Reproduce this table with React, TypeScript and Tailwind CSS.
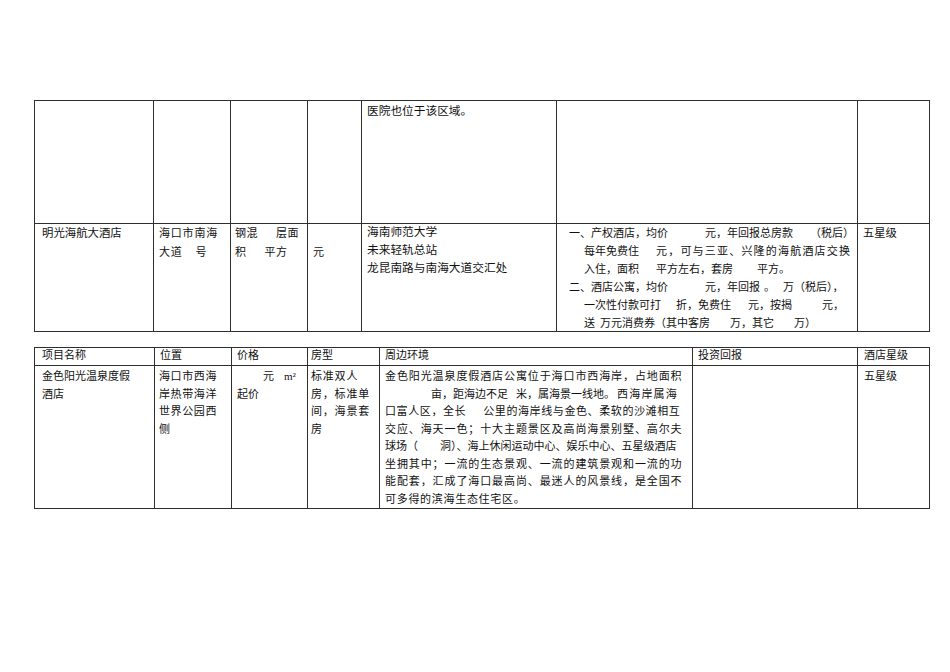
import React from 'react';

const cell = 'border-r border-b border-[#2e2e2e]';

function Gap({ w }: { w: string }) {
  return <span className={`inline-block ${w}`} />;
}

function TopTable() {
  return (
    <div className="grid w-[896px] grid-cols-[119px_77px_77px_54px_195px_301px_72px] grid-rows-[123px_108px] border-l border-t border-[#2e2e2e]">
      {/* row 1 — tail of the previous entry */}
      <div className={cell} />
      <div className={cell} />
      <div className={cell} />
      <div className={cell} />
      <div className={`${cell} pl-[5px] pt-[2px] text-[11.7px] leading-[18px]`}>医院也位于该区域。</div>
      <div className={cell} />
      <div className={cell} />

      {/* row 2 */}
      <div className={`${cell} pl-[7px] text-[11.4px] leading-[18px]`}>明光海航大酒店</div>
      <div className={`${cell} pl-[5px] leading-[19.4px] tracking-[0.8px] whitespace-nowrap`}>
        <div>海口市南海</div>
        <div>大道<Gap w="w-[13px]" />号</div>
      </div>
      <div className={`${cell} pl-[4px] leading-[19.4px] tracking-[0.5px] whitespace-nowrap`}>
        <div>钢混<Gap w="w-[18px]" />层面</div>
        <div>积<Gap w="w-[18px]" />平方</div>
      </div>
      <div className={`${cell} pl-[5px] pt-[19px] leading-[19px]`}>元</div>
      <div className={`${cell} pl-[5px] text-[11.7px] leading-[18px]`}>
        <div>海南师范大学</div>
        <div>未来轻轨总站</div>
        <div>龙昆南路与南海大道交汇处</div>
      </div>
      <div className={`${cell} pl-[12px] leading-[18px] whitespace-nowrap`}>
        <div>一、产权酒店，均价<Gap w="w-[37px]" />元，年回报总房款<Gap w="w-[17px]" />（税后）</div>
        <div className="pl-[15px]">
          每年免费住<Gap w="w-[17px]" /><span className="tracking-[1.2px]">元，可与三亚、兴隆的海航酒店交换</span>
        </div>
        <div className="pl-[15px]">入住，面积<Gap w="w-[17px]" />平方左右，套房<Gap w="w-[24px]" />平方。</div>
        <div>二、酒店公寓，均价<Gap w="w-[37px]" />元，年回报<Gap w="w-[4px]" />。<Gap w="w-[8px]" />万（税后），</div>
        <div className="pl-[15px]">
          一次性付款可打<Gap w="w-[15px]" />折，免费住<Gap w="w-[17px]" />元，按揭<Gap w="w-[30px]" />元，
        </div>
        <div className="pl-[15px]">
          送<Gap w="w-[5px]" />万元消费券（其中客房<Gap w="w-[20px]" />万，其它<Gap w="w-[20px]" />万）
        </div>
      </div>
      <div className={`${cell} pl-[5px] text-[11.3px] leading-[18px]`}>五星级</div>
    </div>
  );
}

function BottomTable() {
  const head = `${cell} leading-[15px] whitespace-nowrap`;
  const body = `${cell} pt-[2px] leading-[17.5px] whitespace-nowrap`;
  return (
    <div className="mt-[15px] grid w-[896px] grid-cols-[120px_77px_76px_72px_313px_165px_72px] grid-rows-[18px_143px] border-l border-t border-[#2e2e2e]">
      <div className={`${head} pl-[7px]`}>项目名称</div>
      <div className={`${head} pl-[5px]`}>位置</div>
      <div className={`${head} pl-[5px]`}>价格</div>
      <div className={`${head} pl-[3px]`}>房型</div>
      <div className={`${head} pl-[5px]`}>周边环境</div>
      <div className={`${head} pl-[5px]`}>投资回报</div>
      <div className={`${head} pl-[6px]`}>酒店星级</div>

      <div className={`${body} pl-[7px]`}>
        <div>金色阳光温泉度假</div>
        <div>酒店</div>
      </div>
      <div className={`${body} pl-[4px] tracking-[0.6px]`}>
        <div>海口市西海</div>
        <div>岸热带海洋</div>
        <div>世界公园西</div>
        <div>侧</div>
      </div>
      <div className={`${body} pl-[5px]`}>
        <div><Gap w="w-[26px]" />元<Gap w="w-[10px]" />m²</div>
        <div>起价</div>
      </div>
      <div className={`${body} pl-[3px] tracking-[0.8px]`}>
        <div>标准双人</div>
        <div>房，标准单</div>
        <div>间，海景套</div>
        <div>房</div>
      </div>
      <div className={`${body} pl-[5px]`}>
        <div className="tracking-[0.9px]">金色阳光温泉度假酒店公寓位于海口市西海岸，占地面积</div>
        <div>
          <Gap w="w-[46px]" />亩，距海边不足<Gap w="w-[8px]" />米，属海景一线地。<Gap w="w-[2px]" />
          <span className="tracking-[1.2px]">西海岸属海</span>
        </div>
        <div className="tracking-[0.6px]">
          口富人区，全长<Gap w="w-[17px]" />公里的海岸线与金色、柔软的沙滩相互
        </div>
        <div className="tracking-[0.9px]">交应、海天一色；十大主题景区及高尚海景别墅、高尔夫</div>
        <div>
          球场（<Gap w="w-[22px]" />洞）、海上休闲运动中心、娱乐中心、五星级酒店
        </div>
        <div className="tracking-[0.9px]">坐拥其中；一流的生态景观、一流的建筑景观和一流的功</div>
        <div className="tracking-[0.9px]">能配套，汇成了海口最高尚、最迷人的风景线，是全国不</div>
        <div className="tracking-[0.7px]">可多得的滨海生态住宅区。</div>
      </div>
      <div className={body} />
      <div className={`${body} pl-[6px]`}>五星级</div>
    </div>
  );
}

export default function App() {
  return (
    <div className="min-h-[672px] bg-white pl-[34px] pt-[100px] text-[11px] text-[#111] font-['Liberation_Serif','Noto_Sans_CJK_SC',serif]">
      <TopTable />
      <BottomTable />
    </div>
  );
}
